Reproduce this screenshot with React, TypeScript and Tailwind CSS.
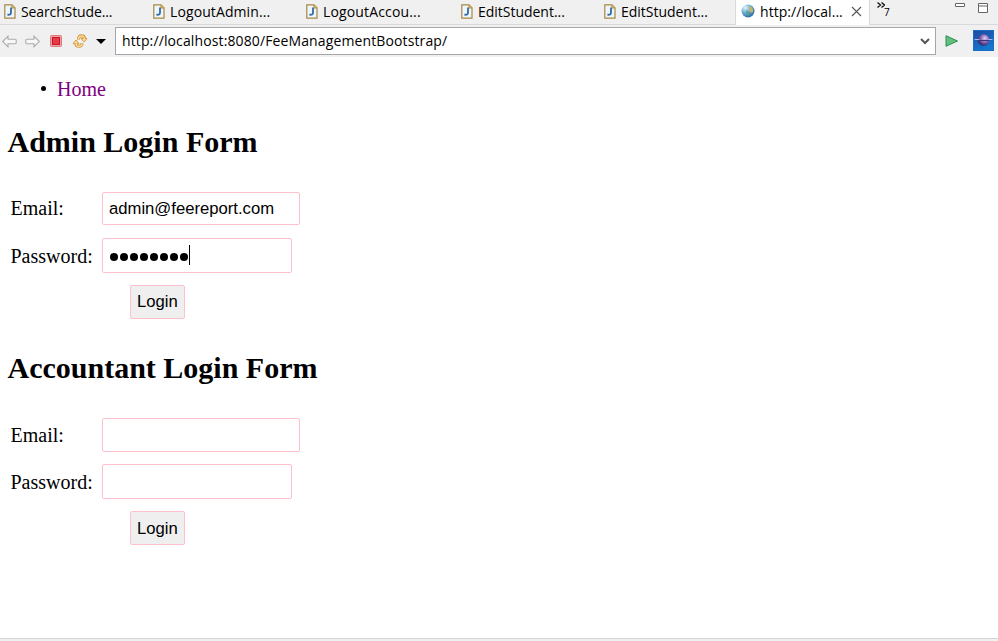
import React from "react";

function JavaFile() {
  return (
    <svg width="12" height="15" viewBox="0 0 12 15" className="shrink-0">
      <path d="M.8.8H8l3 3v10.4H.8z" fill="#edf6ff" stroke="#a8873f" strokeWidth="1.2" />
      <path d="M8 1v3h3" fill="#e8c477" stroke="#b58c35" />
      <path d="M7 3.500v5.200c0 1.600-1.100 2.300-3.600 2" fill="none" stroke="#2f6ba5" strokeWidth="1.800" />
    </svg>
  );
}

function Globe() {
  return (
    <svg width="14" height="14" viewBox="0 0 14 14" className="mt-[-2px] shrink-0">
      <defs>
        <radialGradient id="globe" cx=".3" cy=".25" r=".8">
          <stop stopColor="#e2f5fc" />
          <stop offset=".5" stopColor="#6aadd4" />
          <stop offset="1" stopColor="#2a6ca2" />
        </radialGradient>
      </defs>
      <circle cx="7" cy="7" r="6.5" fill="url(#globe)" />
      <path d="M8 1.500 11.500 4l.8 3-1.300 2-2-1.500-1-2z" fill="#c5b56a" />
      <path d="m5 6 3 2 1 2-1.500 2L5 9z" fill="#5b9d7d" opacity=".7" />
    </svg>
  );
}

function Arrow({ right = false }: { right?: boolean }) {
  return (
    <svg width="15" height="13" viewBox="0 0 15 13" className={right ? "-scale-x-100" : ""}>
      <path d="M.7 6.5 6 1.2v3h7q1.2 0 1.2 1.1v2.4q0 1.1-1.2 1.1H6v3z" fill="#f7f7f7" stroke="#acacac" strokeWidth="1.1" />
    </svg>
  );
}

const tabs = [
  { label: "SearchStude...", box: "w-[149px]", text: "tracking-[-0.12px]" },
  { label: "LogoutAdmin...", box: "w-[153px]", text: "tracking-[0.1px]" },
  { label: "LogoutAccou...", box: "w-[155px]", text: "tracking-[0.15px]" },
  { label: "EditStudent...", box: "w-[143px]", text: "tracking-[-0.02px]" },
  { label: "EditStudent...", box: "w-[131px]", text: "tracking-[-0.02px]" },
];

function Tabs() {
  return (
    <div className="flex h-[25px] border-b border-[#d9d9d9] pl-1 text-[14px]">
      {tabs.map((t, i) => (
        <div key={i} className={`flex h-[22px] shrink-0 items-center gap-[5px] ${t.box}`}>
          <JavaFile />
          <span className={`whitespace-nowrap pt-px ${t.text}`}>{t.label}</span>
        </div>
      ))}
      <div className="flex h-[25px] w-[135px] shrink-0 items-center border-x border-[#d9d9d9] bg-white pb-[2px] pl-[5px]">
        <Globe />
        <span className="ml-[5px] w-[91px] whitespace-nowrap tracking-[0.05px]">http://local...</span>
        <svg width="11" height="11" viewBox="0 0 11 11" className="shrink-0">
          <path d="m1 1 9 9m0-9-9 9" stroke="#555" strokeWidth="1.1" />
        </svg>
      </div>
      <div className="flex w-[83px] pl-[7px]">
        <svg width="8" height="7" viewBox="0 0 8 7" className="mt-[2px]">
          <path d="m.5.5 3 2.500-3 2.500m4-5 3 2.500-3 2.500" fill="none" stroke="#111" strokeWidth="1.3" />
        </svg>
        <span className="-ml-px mt-1 text-[10px] leading-4">7</span>
      </div>
      <svg width="36" height="15" viewBox="0 0 36 15" className="shrink-0">
        <path d="M2.5 3.5h9v3h-9zM25.500 3.5h9v9h-9zm0 2.500h9" fill="#fff" stroke="#666" />
      </svg>
    </div>
  );
}

function Toolbar() {
  return (
    <div className="flex h-8 items-center pl-[2px]">
      <Arrow />
      <span className="ml-2"><Arrow right /></span>
      <svg width="12" height="12" viewBox="0 0 12 12" className="ml-[10px]">
        <rect x=".5" y=".5" width="11" height="11" rx="1" fill="#f4a0a4" stroke="#d97a7f" />
        <rect x="2.500" y="2.500" width="7" height="7" fill="#e63b4a" stroke="#c51825" />
      </svg>
      <svg width="16" height="16" viewBox="0 0 16 16" className="ml-[10px]">
        <g fill="none" stroke="#cf9440" strokeWidth="3">
          <path d="M6.500 6.500Q6.500 2.800 9.500 2.800T12.500 5.500M10 10.200Q10 13.300 7 13.300T4 11" />
        </g>
        <path d="M9 5.500h6L12.200 9zM1 10.700h6L4 7z" fill="#ffdf91" stroke="#cf9440" strokeWidth=".9" />
        <path d="M6.500 6Q6.500 2.800 9.500 2.800T12.400 6M10 10.700Q10 13.300 7 13.300T4 10.300" fill="none" stroke="#ffe19a" strokeWidth="1.300" />
      </svg>
      <span className="ml-2 h-0 w-0 border-x-5 border-t-5 border-x-transparent border-t-black" />
      <div className="ml-[9px] flex h-7 w-[821px] shrink-0 items-center justify-between border border-[#a5a6ac] bg-white pl-[6px] pr-[5px] text-[14px]">
        <span className="pb-[2px] tracking-[0.12px]">http://localhost:8080/FeeManagementBootstrap/</span>
        <svg width="10" height="7" viewBox="0 0 10 7">
          <path d="m1 1 4 4 4-4" fill="none" stroke="#555" strokeWidth="2" />
        </svg>
      </div>
      <svg width="14" height="12" viewBox="0 0 14 12" className="ml-[9px] shrink-0">
        <path d="M1 .7 12.500 6 1 11.300z" fill="#66bd7d" stroke="#299050" />
      </svg>
      <svg width="21" height="21" viewBox="0 0 21 21" className="mb-[2px] ml-[14px] shrink-0">
        <defs>
          <linearGradient id="sky" x2=".4" y2="1">
            <stop stopColor="#1d479f" /><stop offset="1" stopColor="#1478d0" />
          </linearGradient>
          <radialGradient id="planet" cx=".62" cy=".35" r=".7">
            <stop stopColor="#e0d4f0" /><stop offset=".5" stopColor="#8565b5" /><stop offset="1" stopColor="#241855" />
          </radialGradient>
        </defs>
        <path d="M0 0h21v21H0z" fill="url(#sky)" />
        <path d="M.5.5h20v20H.5z" fill="none" stroke="#1b6dc1" />
        <circle cx="10.500" cy="10" r="5.800" fill="url(#planet)" />
        <path d="M1.500 9.500h5M15 9.500h4.500" stroke="#a9b3e5" />
        <path d="M5 10.500h11" stroke="#40307a" />
      </svg>
    </div>
  );
}

const field = "flex items-center rounded-[2px] border border-[#ffc0cb] px-[6px] font-['Liberation_Sans',sans-serif] text-[16.67px]";

function LoginForm({ title, email = "", password = "", second = false }: { title: string; email?: string; password?: string; second?: boolean }) {
  return (
    <section className="h-[226px]">
      <h2 className="pl-[7.5px] text-[30px] font-bold leading-[34px]">{title}</h2>
      <div className="mt-[33px]">
        <div className={`flex items-center pl-[10px] ${second ? "h-[34px]" : "h-[33px]"}`}>
          <span className="w-[92px] pl-[0.5px] pb-px">Email:</span>
          <div className={`${field} h-full w-[198px] bg-white`}>{email}</div>
        </div>
        <div className={`flex h-[35px] items-center pl-[10px] ${second ? "mt-3" : "mt-[13px]"}`}>
          <span className="w-[92px] pl-[0.5px]">Password:</span>
          <div className={`${field} h-full w-[190px] bg-white`}>
            {password && (
              <>
                <span className="flex gap-[2px] pl-px pr-px pt-[2px]">
                  {password.split("").map((_, i) => <i key={i} className="h-2 w-2 rounded-full bg-black" />)}
                </span>
                <span className="mb-px h-5 w-px bg-black" />
              </>
            )}
          </div>
        </div>
        <button className={`${field} ml-[130px] mt-3 h-[34px] w-[55px] bg-[#efefef] ${second ? "pt-px" : ""}`}>Login</button>
      </div>
    </section>
  );
}

export default function App() {
  return (
    <div className="flex h-[641px] w-[998px] flex-col overflow-hidden bg-white text-black">
      <header className="h-[57px] bg-[#f0f0f0] font-['Open_Sans','Noto_Sans',sans-serif]">
        <Tabs />
        <Toolbar />
      </header>
      <main className="flex-1 font-['Liberation_Serif',serif] text-[20px] leading-6">
        <ul className="mb-[24px] mt-5 flex items-center pl-[41px]">
          <li className="flex items-center gap-[11px]">
            <span className="mb-px h-[5px] w-[5px] rounded-full bg-black" />
            <a className="text-[#800080]">Home</a>
          </li>
        </ul>
        <LoginForm title="Admin Login Form" email="admin@feereport.com" password="********" />
        <LoginForm title="Accountant Login Form" second />
      </main>
      <footer className="h-[3px] border-t border-[#d5d5d5] bg-[#f0f0f0]" />
    </div>
  );
}
